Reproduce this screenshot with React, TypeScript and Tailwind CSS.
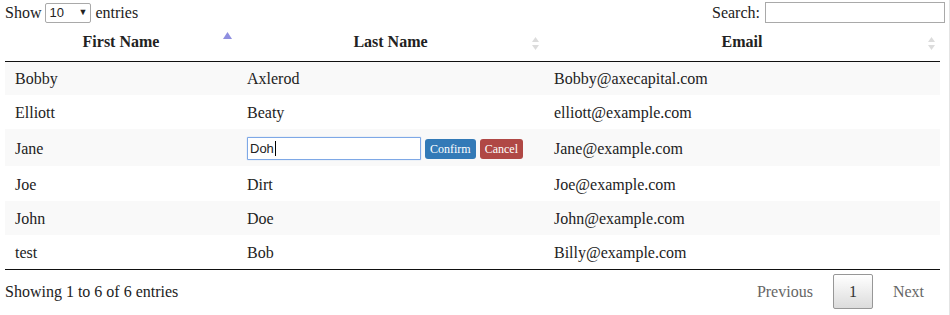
import React from "react";

const rows = [
  { first: "Bobby", last: "Axlerod", email: "Bobby@axecapital.com", h: "h-[34px]" },
  { first: "Elliott", last: "Beaty", email: "elliott@example.com", h: "h-[34px]" },
  { first: "Jane", last: "Doh", email: "Jane@example.com", h: "h-[37px]", editing: true },
  { first: "Joe", last: "Dirt", email: "Joe@example.com", h: "h-[35px]" },
  { first: "John", last: "Doe", email: "John@example.com", h: "h-[34px]" },
  { first: "test", last: "Bob", email: "Billy@example.com", h: "h-[34px]" },
];

function SortIcon({ active }: { active?: boolean }) {
  if (active) {
    return (
      <svg width="9" height="8" viewBox="0 0 9 8" className="absolute right-[5px] top-[8px]">
        <path d="M4.5 0 L9 7 L0 7 Z" fill="#8f8fe0" />
      </svg>
    );
  }
  return (
    <svg width="9" height="16" viewBox="0 0 9 16" className="absolute right-[4px] top-[12px]">
      <path d="M4.5 1 L8 6 L1 6 Z" fill="#dcdcdc" />
      <path d="M4.5 14 L8 9 L1 9 Z" fill="#dcdcdc" />
    </svg>
  );
}

export default function App() {
  return (
    <div className="w-[950px] h-[315px] bg-white text-[16px] text-[#222] border-r border-[#e4e4e4]" style={{ fontFamily: '"Liberation Serif", "Times New Roman", serif' }}>
      <div className="w-[940px] pl-[5px]">
        {/* top controls */}
        <div className="flex items-center justify-between h-[24px] pt-[1px]">
          <div className="flex items-center gap-[4px]">
            <span>Show</span>
            <div className="flex items-center justify-between w-[46px] h-[20px] border border-[#a9a9a9] rounded-[2px] px-[3px] text-[13px]" style={{ fontFamily: '"Liberation Sans", Arial, sans-serif' }}>
              <span>10</span>
              <span className="text-[9px]">▼</span>
            </div>
            <span>entries</span>
          </div>
          <div className="flex items-center gap-[5px] -mr-[5px]">
            <span>Search:</span>
            <div className="w-[180px] h-[21px] border border-[#a9a9a9]" />
          </div>
        </div>

        {/* table */}
        <table className="w-[935px] table-fixed border-collapse">
          <colgroup>
            <col className="w-[232px]" />
            <col className="w-[307px]" />
            <col className="w-[396px]" />
          </colgroup>
          <thead>
            <tr className="h-[37px] border-b border-[#111]">
              <th className="relative font-bold text-center">
                First Name
                <SortIcon active />
              </th>
              <th className="relative font-bold text-center">
                Last Name
                <SortIcon />
              </th>
              <th className="relative font-bold text-center">
                Email
                <SortIcon />
              </th>
            </tr>
          </thead>
          <tbody>
            {rows.map((r, i) => (
              <tr key={r.first} className={`${r.h} ${i % 2 === 0 ? "bg-[#f9f9f9]" : "bg-white"}`}>
                <td className="px-[10px] pt-[2px]">{r.first}</td>
                <td className="px-[10px] pt-[2px]">
                  {r.editing ? (
                    <div className="flex items-center">
                      <div className="w-[174px] h-[23px] border border-[#7ea8e6] rounded-[1px] bg-white flex items-center pl-[2px] text-[13px] shadow-[0_0_1px_#7ea8e6]" style={{ fontFamily: '"Liberation Sans", Arial, sans-serif' }}>
                        Doh<span className="inline-block w-[1px] h-[15px] bg-black ml-[1px]" />
                      </div>
                      <span className="ml-[4px] h-[20px] px-[5px] flex items-center rounded-[3px] bg-[#337ab7] text-white text-[12px]">Confirm</span>
                      <span className="ml-[4px] h-[20px] px-[5px] flex items-center rounded-[3px] bg-[#b04845] text-white text-[12px]">Cancel</span>
                    </div>
                  ) : (
                    r.last
                  )}
                </td>
                <td className="px-[10px] pt-[2px]">{r.email}</td>
              </tr>
            ))}
          </tbody>
        </table>

        {/* footer */}
        <div className="w-[935px] border-t border-[#111] flex items-start justify-between">
          <div className="pt-[10px]">Showing 1 to 6 of 6 entries</div>
          <div className="flex items-center pt-[4px] -mr-[1px]">
            <span className="px-[17px] h-[35px] flex items-center text-[#666]">Previous</span>
            <span className="ml-[3px] w-[40px] h-[35px] flex items-center justify-center border border-[#979797] rounded-[2px] bg-gradient-to-b from-white to-[#dcdcdc] text-[#333]">1</span>
            <span className="ml-[3px] px-[17px] h-[35px] flex items-center text-[#666]">Next</span>
          </div>
        </div>
      </div>
    </div>
  );
}
